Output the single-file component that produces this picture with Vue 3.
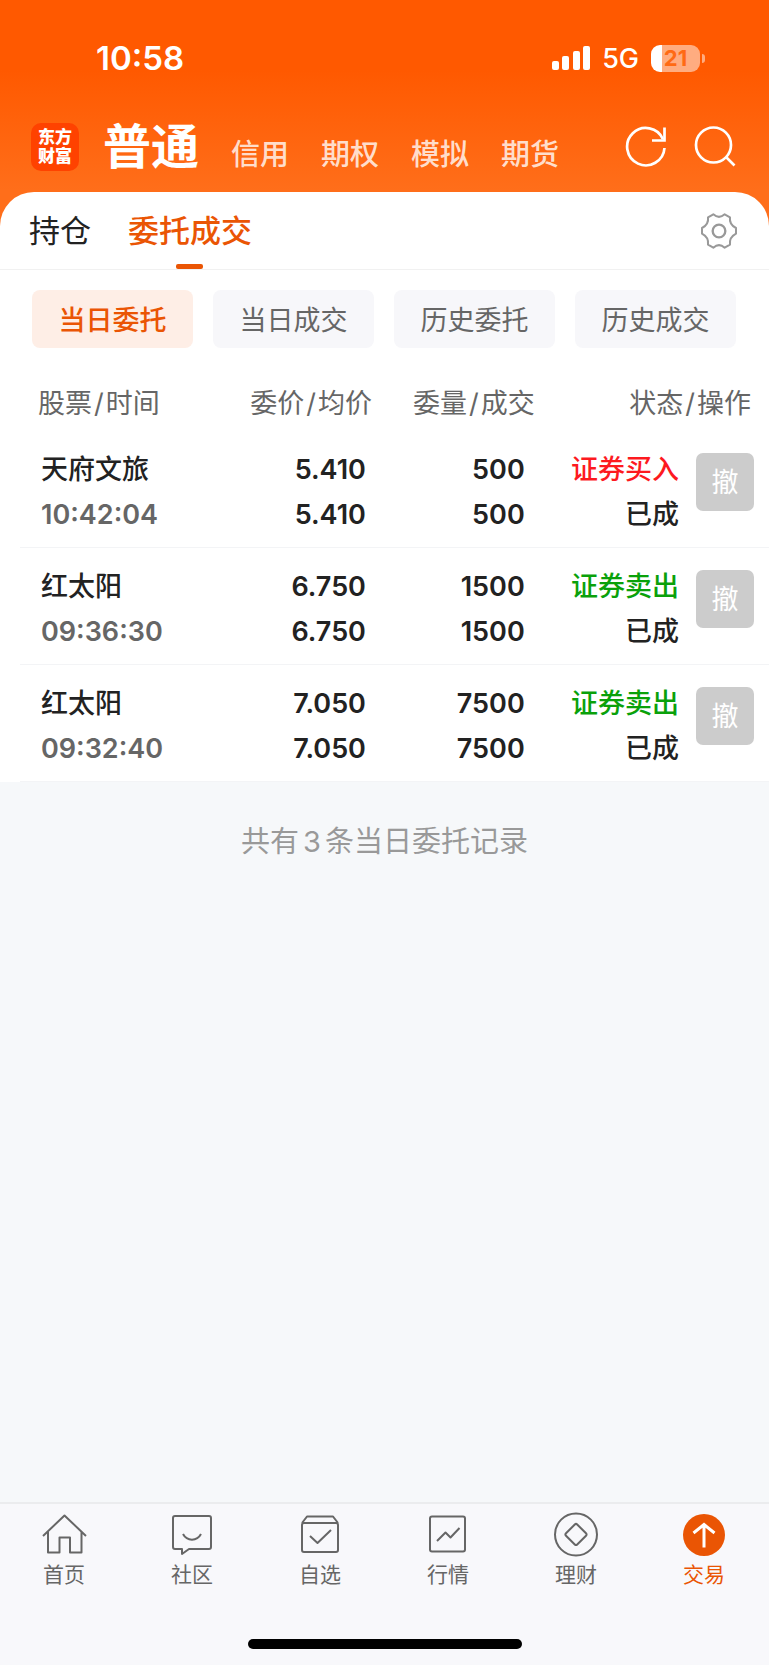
<script setup>
import { ref } from 'vue'

const accounts = ['信用', '期权', '模拟', '期货']
const filters = ['当日委托', '当日成交', '历史委托', '历史成交']
const activeFilter = ref('当日委托')

const orders = [
  { name: '天府文旅', time: '10:42:04', price: '5.410', avg: '5.410', qty: '500', done: '500', side: '证券买入', kind: 'buy', status: '已成' },
  { name: '红太阳', time: '09:36:30', price: '6.750', avg: '6.750', qty: '1500', done: '1500', side: '证券卖出', kind: 'sell', status: '已成' },
  { name: '红太阳', time: '09:32:40', price: '7.050', avg: '7.050', qty: '7500', done: '7500', side: '证券卖出', kind: 'sell', status: '已成' }
]
</script>

<template>
  <div class="page">
    <header class="top">
      <div class="status">
        <span class="clock">10:58</span>
        <div class="signals">
          <svg class="bars" width="38" height="24" viewBox="0 0 38 24" fill="#fff" aria-hidden="true">
            <rect x="0" y="15" width="7" height="9" rx="2" />
            <rect x="10" y="10" width="7" height="14" rx="2" />
            <rect x="21" y="5" width="7" height="19" rx="2" />
            <rect x="31" y="0" width="7" height="24" rx="2" />
          </svg>
          <span class="net">5G</span>
          <span class="battery"><span class="level">21</span></span>
        </div>
      </div>
      <nav class="accounts">
        <div class="logo"><span>东方</span><span>财富</span></div>
        <h1>普通</h1>
        <div class="others">
          <a v-for="a in accounts" :key="a" href="#">{{ a }}</a>
        </div>
        <div class="tools">
          <button type="button" aria-label="刷新">
            <svg width="42" height="42" viewBox="0 0 42 42" fill="none" stroke="#fff" stroke-width="2.700">
              <path d="M39.500 22A18.700 18.700 0 1 1 38 13.200" />
              <path d="M39.500 1.500V14.500H27" />
            </svg>
          </button>
          <button type="button" aria-label="搜索">
            <svg width="42" height="42" viewBox="0 0 42 42" fill="none" stroke="#fff" stroke-width="2.700">
              <circle cx="19.500" cy="19" r="17.500" />
              <path d="M32 31l8.500 8.500" />
            </svg>
          </button>
        </div>
      </nav>
    </header>

    <main class="card">
      <div class="tabs">
        <button type="button" class="tab">持仓</button>
        <button type="button" class="tab on">委托成交</button>
        <button type="button" class="gear" aria-label="设置">
          <svg width="36" height="36" viewBox="0 0 108 108" fill="none" stroke="#999" stroke-width="6" stroke-linejoin="round">
            <path d="M37 4Q54 19 71 4L87 13Q84 34 105 45V62Q84 73 87 95L71 104Q54 89 37 104L21 95Q24 73 3 62V45Q24 34 21 13Z" />
            <circle cx="54" cy="54" r="19" stroke-width="7" />
          </svg>
        </button>
      </div>

      <div class="filters">
        <button
          v-for="f in filters"
          :key="f"
          type="button"
          :class="['chip', { on: f === activeFilter }]"
          @click="activeFilter = f"
        >{{ f }}</button>
      </div>

      <table class="orders">
        <colgroup>
          <col />
          <col class="c-price" />
          <col class="c-qty" />
          <col class="c-state" />
          <col class="c-act" />
        </colgroup>
        <thead>
          <tr>
            <th class="name">股票<i>/</i>时间</th>
            <th class="price">委价<i>/</i>均价</th>
            <th class="qty">委量<i>/</i>成交</th>
            <th class="state" colspan="2">状态<i>/</i>操作</th>
          </tr>
        </thead>
        <tbody>
          <tr v-for="o in orders" :key="o.time">
            <td class="name"><div>{{ o.name }}</div><div class="time">{{ o.time }}</div></td>
            <td class="price"><div>{{ o.price }}</div><div>{{ o.avg }}</div></td>
            <td class="qty"><div>{{ o.qty }}</div><div>{{ o.done }}</div></td>
            <td class="state"><div :class="o.kind">{{ o.side }}</div><div>{{ o.status }}</div></td>
            <td class="act"><button type="button">撤</button></td>
          </tr>
        </tbody>
      </table>
    </main>

    <p class="summary">共有<span>{{ orders.length }}</span>条当日委托记录</p>

    <footer class="bottom">
      <nav class="menu">
        <a href="#">
          <svg width="46" height="46" viewBox="0 0 46 46">
            <path d="M2 24L23.500 3.500 45 24M7 20v20.500h11.500V25.500h10.500v15h11.500V20" />
          </svg>
          首页
        </a>
        <a href="#">
          <svg width="46" height="46" viewBox="0 0 46 46">
            <path d="M6 4h34a2 2 0 0 1 2 2v29a2 2 0 0 1-2 2H20l-7 5v-5H6a2 2 0 0 1-2-2V6a2 2 0 0 1 2-2z" />
            <path d="M14 22c4 7.500 14 7.500 18 0" />
          </svg>
          社区
        </a>
        <a href="#">
          <svg width="46" height="46" viewBox="0 0 46 46">
            <path d="M5 11l5-6.500h26l5 6.500M7 11h32a2 2 0 0 1 2 2v25a2 2 0 0 1-2 2H7a2 2 0 0 1-2-2V13a2 2 0 0 1 2-2z" />
            <path d="M13 24l7.500 7L34 18" />
          </svg>
          自选
        </a>
        <a href="#">
          <svg width="46" height="46" viewBox="0 0 46 46">
            <rect x="5" y="4.500" width="35" height="35" rx="2" />
            <path d="M12 29l8.500-8.500 5 5L34.500 16" />
          </svg>
          行情
        </a>
        <a href="#">
          <svg width="46" height="46" viewBox="0 0 46 46">
            <circle cx="23" cy="22.500" r="21" />
            <path d="M21.800 12.500q1.200-1.200 2.400 0l8.800 8.800q1.200 1.200 0 2.400l-8.800 8.800q-1.200 1.200-2.400 0l-8.800-8.800q-1.200-1.200 0-2.400z" />
          </svg>
          理财
        </a>
        <a href="#" class="on">
          <svg width="46" height="46" viewBox="0 0 46 46">
            <circle class="disc" cx="23" cy="23" r="21" />
            <path class="arrow" d="M23 35.500V13M12.500 21L23 12.500l10.500 8.500" />
          </svg>
          交易
        </a>
      </nav>
      <div class="home-bar"></div>
    </footer>
  </div>
</template>

<style>
body {
  margin: 0;
}
</style>

<style scoped>
.page {
  min-height: 100vh;
  display: flex;
  flex-direction: column;
  background: #f6f8fa;
  font-family: Inter, "Noto Sans CJK SC", sans-serif;
  color: #222;
}
button {
  border: 0;
  padding: 0;
  margin: 0;
  background: none;
  font: inherit;
  color: inherit;
  cursor: pointer;
}
svg {
  display: block;
}
a {
  color: inherit;
  text-decoration: none;
}

.top {
  height: 232px;
  margin-bottom: -40px;
  background: linear-gradient(#ff5900 0, #ff5900 70px, #ff6e1a 190px);
  color: #fff;
}
.status {
  height: 116px;
  box-sizing: border-box;
  padding: 0 69px 0 96px;
  display: flex;
  align-items: center;
  justify-content: space-between;
}
.clock {
  font-size: 33px;
  font-weight: 600;
}
.signals {
  display: flex;
  align-items: center;
  gap: 12px;
}
.net {
  font-size: 27px;
  font-weight: 500;
}
.battery {
  position: relative;
  width: 49px;
  height: 27px;
  border-radius: 9px;
  background: linear-gradient(90deg, #fff 11px, #ffac80 11px);
  color: #ff6a14;
  text-align: center;
}
.battery::after {
  content: "";
  position: absolute;
  right: -5px;
  top: 9px;
  width: 3px;
  height: 9px;
  border-radius: 0 4px 4px 0;
  background: #ffac80;
}
.level {
  display: block;
  font-size: 22px;
  line-height: 27px;
  font-weight: 700;
}
.accounts {
  display: flex;
  align-items: center;
  height: 62px;
  padding: 0 33px 0 31px;
}
.logo {
  width: 48px;
  height: 48px;
  border-radius: 10px;
  background: #ff4200;
  display: flex;
  flex-direction: column;
  align-items: center;
  justify-content: center;
  font-size: 17px;
  line-height: 19px;
  font-weight: 900;
}
h1 {
  margin: 0 0 0 24px;
  font-size: 48px;
  line-height: 60px;
  font-weight: 700;
}
.others {
  display: flex;
  gap: 32px;
  margin: 16px 0 0 32px;
  font-size: 29px;
  line-height: 40px;
  font-weight: 500;
  color: rgba(255, 255, 255, 0.8);
}
.tools {
  display: flex;
  gap: 27px;
  margin-left: auto;
}

.card {
  position: relative;
  background: #fff;
  border-radius: 34px 34px 0 0;
}
.tabs {
  display: flex;
  align-items: center;
  height: 77px;
  padding: 0 32px 0 29px;
  border-bottom: 1px solid #f1f1f1;
}
.tab {
  position: relative;
  height: 77px;
  margin-right: 37px;
  font-size: 31px;
  line-height: 77px;
}
.tab.on {
  color: #ea5504;
  font-weight: 500;
}
.tab.on::after {
  content: "";
  position: absolute;
  left: 50%;
  bottom: 0;
  width: 27px;
  height: 5px;
  margin-left: -14px;
  border-radius: 2px;
  background: #ea5504;
}
.gear {
  margin-left: auto;
}
.filters {
  display: grid;
  grid-template-columns: repeat(4, 1fr);
  gap: 20px;
  padding: 20px 33px 0 32px;
}
.chip {
  height: 58px;
  padding-bottom: 2px;
  border-radius: 8px;
  background: #f7f7fa;
  color: #666;
  font-size: 27px;
}
.chip.on {
  background: #feeee6;
  color: #ea5504;
  font-weight: 500;
}

.orders {
  width: calc(100% - 20px);
  margin-left: 20px;
  table-layout: fixed;
  border-collapse: collapse;
  font-size: 27px;
  line-height: 45px;
}
.c-price {
  width: 21%;
}
.c-qty {
  width: 22%;
}
.c-state {
  width: 21%;
}
.c-act {
  width: 74px;
}
th {
  height: 55px;
  padding: 28px 0 0;
  font-weight: 400;
  color: #666;
  text-align: right;
  white-space: nowrap;
}
th i {
  font-style: normal;
  padding: 0 2px;
}
th.name {
  padding-left: 18px;
  text-align: left;
}
th.price {
  padding-right: 1px;
}
th.qty {
  padding-right: 3px;
}
th.state {
  padding-right: 18px;
}
td {
  padding: 16px 0 10px;
  border-bottom: 1px solid #f3f4f6;
  text-align: right;
  font-weight: 500;
  white-space: nowrap;
}
td.name {
  padding-left: 21px;
  text-align: left;
}
td.price,
td.qty {
  font-weight: 600;
}
td.price {
  padding-right: 7px;
}
td.qty {
  padding-right: 13px;
}
td.state {
  padding-right: 16px;
}
.time {
  color: #666;
  font-weight: 600;
}
.buy {
  color: #fd1a1f;
}
.sell {
  color: #0aa10a;
}
td.act {
  vertical-align: top;
}
.act button {
  display: block;
  width: 58px;
  height: 58px;
  margin: 6px 0 0 1px;
  border-radius: 7px;
  background: #ccc;
  color: #fff;
  font-size: 27px;
  font-weight: 400;
}

.summary {
  margin: 37px 0;
  text-align: center;
  font-size: 29px;
  line-height: 46px;
  color: #999;
}
.summary span {
  padding: 0 4px;
}

.bottom {
  margin-top: auto;
  border-top: 2px solid #ebecee;
  background: #f8f8fb;
}
.menu {
  display: grid;
  grid-template-columns: repeat(6, 1fr);
  padding: 8px 1px 0 0;
}
.menu a {
  display: flex;
  flex-direction: column;
  align-items: center;
  font-size: 21px;
  line-height: 34px;
  color: #666;
}
.menu svg {
  fill: none;
  stroke: #666;
  stroke-width: 2;
  stroke-linejoin: round;
}
.menu .on {
  color: #ea5504;
}
.menu .disc {
  fill: #ea5504;
  stroke: none;
}
.menu .arrow {
  stroke: #fff;
  stroke-width: 3;
  stroke-linejoin: miter;
}
.home-bar {
  width: 274px;
  height: 10px;
  margin: 47px auto 16px;
  border-radius: 5px;
  background: #000;
}
</style>
